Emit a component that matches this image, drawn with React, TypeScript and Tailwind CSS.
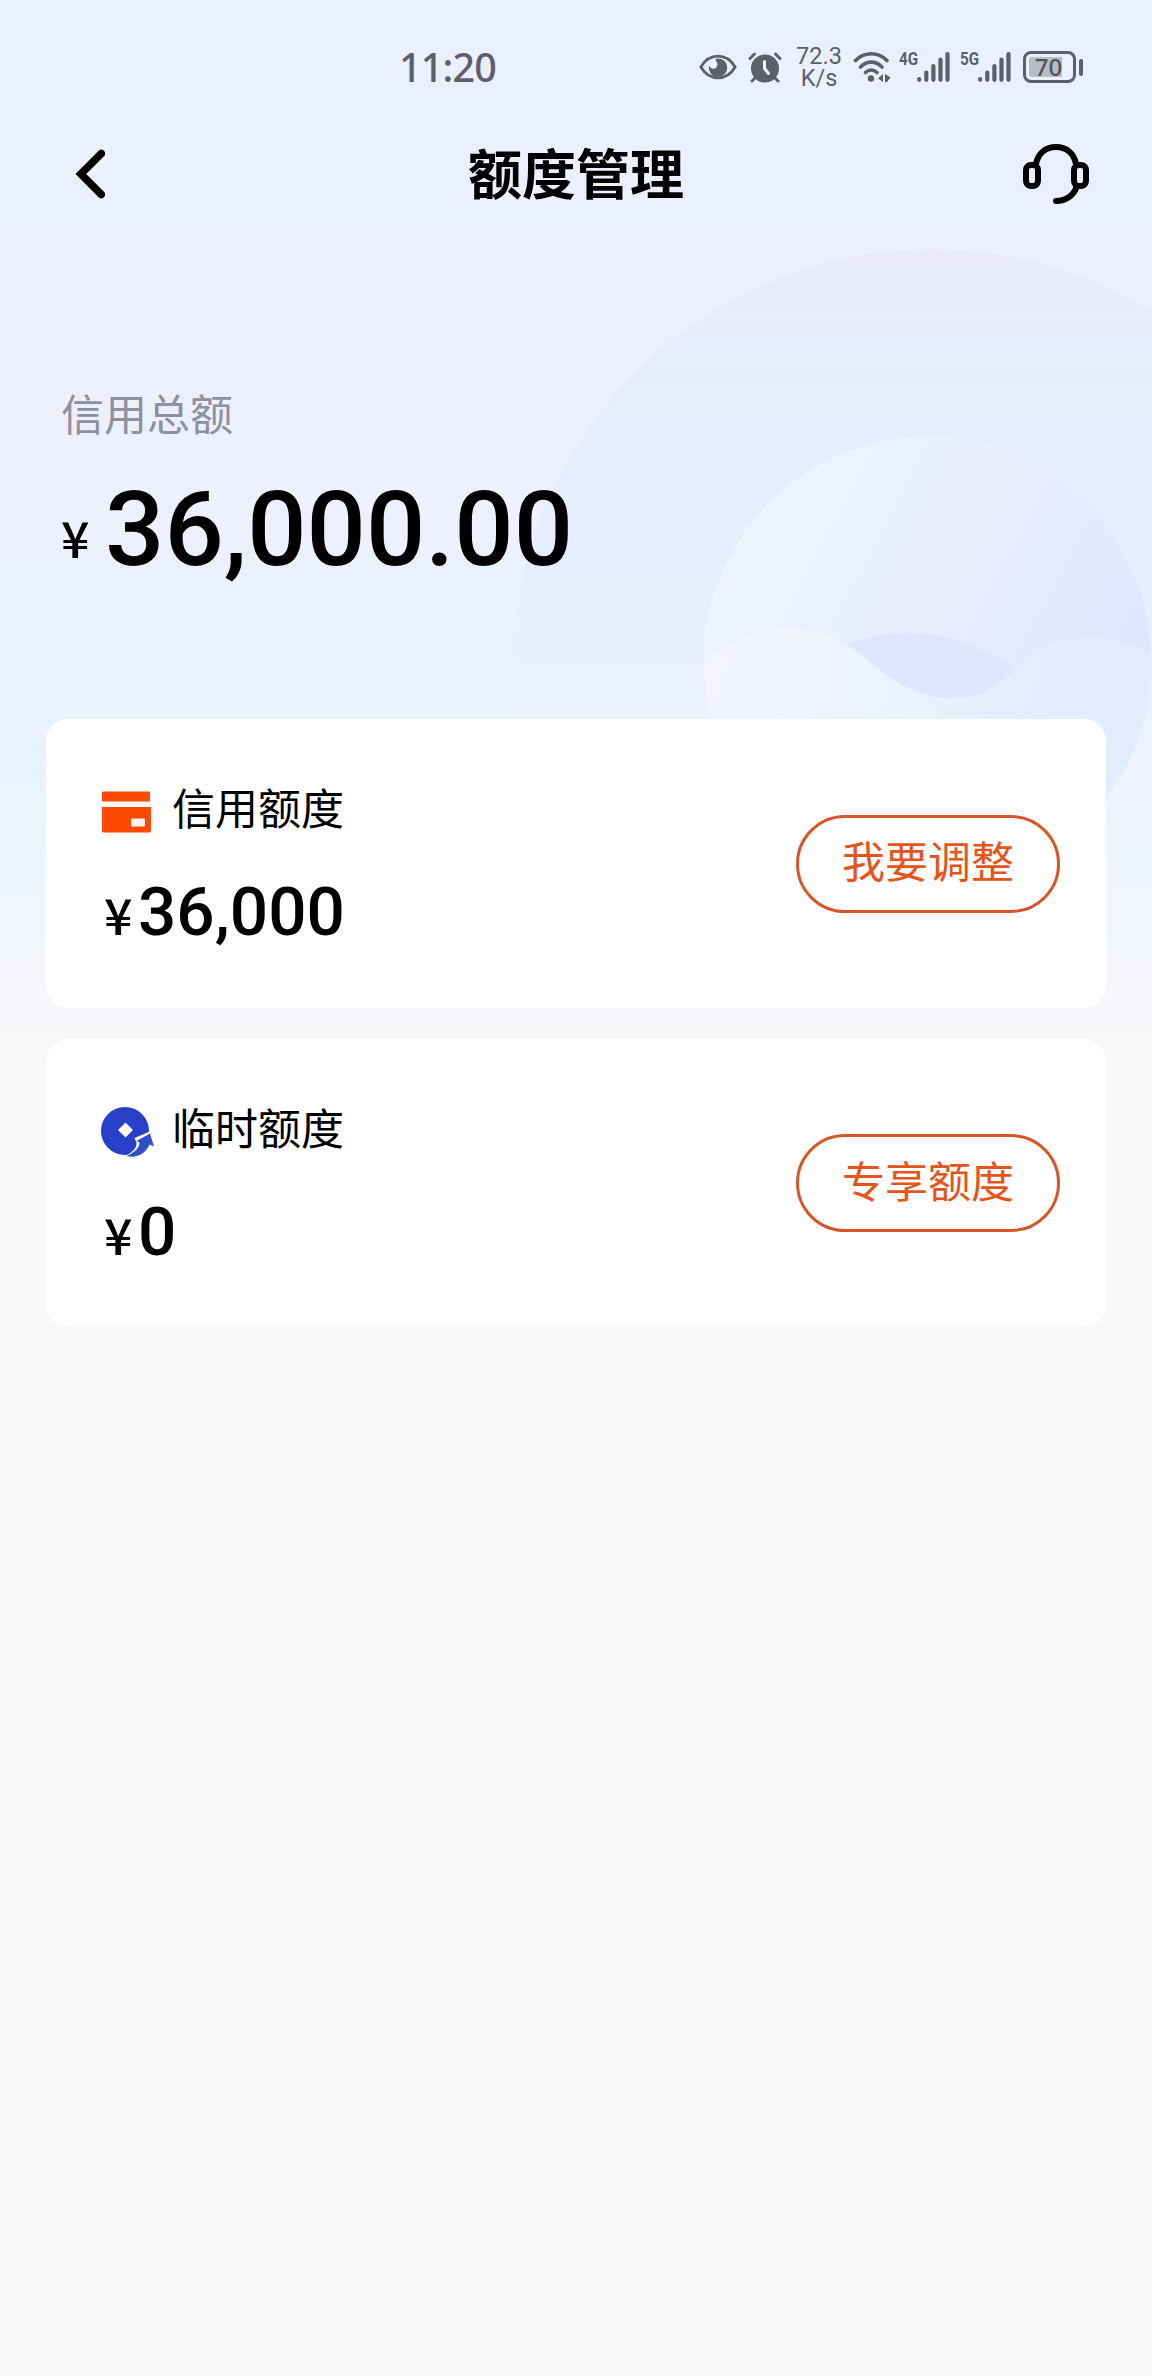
import type { ReactNode } from 'react';

interface LimitCardProps {
    icon: ReactNode;
    title: string;
    amount: string;
    action: string;
}

function Backdrop() {
    return (
        <svg className="absolute left-0 top-0" width="1152" height="1080" viewBox="0 0 1152 1080" fill="none">
            <defs>
                <linearGradient id="sky" x1="0" y1="0" x2="0" y2="1">
                    <stop offset="0" stopColor="#eaf0ff" />
                    <stop offset="0.2" stopColor="#ebf0ff" />
                    <stop offset="0.3" stopColor="#eeeffe" />
                    <stop offset="0.46" stopColor="#edf0ff" />
                    <stop offset="0.58" stopColor="#eaf1ff" />
                    <stop offset="0.72" stopColor="#e9f2ff" />
                    <stop offset="0.8" stopColor="#ecf6ff" />
                    <stop offset="0.86" stopColor="#f3f5fe" />
                    <stop offset="0.94" stopColor="#f6f6fa" />
                    <stop offset="1" stopColor="#f8f8f8" />
                </linearGradient>
                <linearGradient id="halo" x1="0" y1="0" x2="0" y2="1">
                    <stop offset="0" stopColor="#eae9fb" />
                    <stop offset="0.14" stopColor="#e5edfd" />
                    <stop offset="0.35" stopColor="#e6edfe" />
                    <stop offset="0.52" stopColor="#e9f1ff" />
                    <stop offset="0.62" stopColor="#f0f2ff" />
                    <stop offset="0.8" stopColor="#f4f6fe" stopOpacity="0" />
                </linearGradient>
                <linearGradient id="ball" x1="0.1" y1="0.2" x2="0.95" y2="0.65">
                    <stop offset="0" stopColor="#edf4ff" />
                    <stop offset="0.5" stopColor="#e8ecfd" />
                    <stop offset="1" stopColor="#dfe5fe" />
                </linearGradient>
                <linearGradient id="wave" x1="0" y1="0" x2="1" y2="0.2">
                    <stop offset="0" stopColor="#f4f4fe" />
                    <stop offset="0.4" stopColor="#ecf3ff" />
                    <stop offset="0.75" stopColor="#e4edfe" />
                    <stop offset="1" stopColor="#e3ebfe" />
                </linearGradient>
                <linearGradient id="rim" x1="0" y1="0.3" x2="0.8" y2="0.4">
                    <stop offset="0" stopColor="#f1f6ff" />
                    <stop offset="1" stopColor="#f1f6ff" stopOpacity="0" />
                </linearGradient>
                <clipPath id="ballClip">
                    <circle cx="928" cy="661" r="224" />
                </clipPath>
            </defs>
            <rect width="1152" height="1080" fill="url(#sky)" />
            <circle cx="933" cy="669" r="420" fill="url(#halo)" />
            <circle cx="928" cy="661" r="223" fill="url(#ball)" stroke="url(#rim)" strokeWidth="2" />
            <g clipPath="url(#ballClip)">
                <path d="M840 648C890 624 960 624 1030 680V720H850Z" fill="#e0e5fe" />
                <path
                    d="M704 661C740 632 800 612 853 649C885 673 908 698 953 698C990 698 1000 680 1024 663C1058 630 1115 629 1152 656V890H704Z"
                    fill="url(#wave)"
                />
            </g>
        </svg>
    );
}

function EyeIcon() {
    return (
        <svg width="38" height="26" viewBox="0 0 38 26" fill="none">
            <path d="M1.8 13C6 6 12 2.2 19 2.2S32 6 36.2 13C32 20 26 23.8 19 23.8S6 20 1.8 13Z" stroke="currentColor" strokeWidth="2.8" strokeLinejoin="round" />
            <path d="M18 4.500A9.200 9.200 0 1 1 10 11.500C11 15 16.500 16 18 12.500C19 9.800 18.200 7.500 16 6Z" fill="currentColor" />
        </svg>
    );
}

function AlarmIcon() {
    return (
        <svg width="34" height="31" viewBox="0 0 34 31" fill="none">
            <circle cx="17" cy="16.500" r="14" fill="currentColor" />
            <path d="M2 6.500L6.500 2M32 6.500L27.500 2M7 26L4 29M27 26L30 29" stroke="currentColor" strokeWidth="3" strokeLinecap="round" />
            <path d="M16.500 9.500V16.500L20.500 21.500" stroke="#eaf0ff" strokeWidth="3" strokeLinecap="round" strokeLinejoin="round" />
        </svg>
    );
}

function WifiIcon() {
    return (
        <svg width="38" height="32" viewBox="0 0 38 32" fill="none">
            <path d="M2.500 9.500C11.500 0.500 25 0.500 34 9.500M7.500 16C14 9.500 22.500 9.500 29 16M12.500 21.500C16 18.300 20.500 18.300 24 21.500" stroke="currentColor" strokeWidth="3.600" strokeLinecap="round" />
            <circle cx="18" cy="27.500" r="3.200" fill="currentColor" />
            <path d="M30 23V31L25 27.500ZM32 23L37.500 26.500L34 31H32Z" fill="currentColor" />
        </svg>
    );
}

function Signal({ label }: { label: string }) {
    return (
        <div className="flex items-start">
            <span className="w-[18px] origin-left scale-x-80 font-[Roboto] text-[19px] leading-[16px] font-bold">{label}</span>
            <svg width="33" height="32" viewBox="0 0 33 32" fill="none">
                <path d="M2.200 28V28.800M9.300 21.500V28.800M16.400 15V28.800M23.500 8.500V28.800M30.500 3V28.800" stroke="currentColor" strokeWidth="4.200" strokeLinecap="round" />
            </svg>
        </div>
    );
}

function Battery() {
    return (
        <div className="flex items-center gap-[3px]">
            <div className="flex h-[32px] w-[53px] items-center rounded-[8px] border-[3px] border-[#5d606b] p-[3px]">
                <div className="flex h-[20px] w-[33px] items-center justify-center rounded-l-[3px] bg-[#b8bcc7] pl-[6px]">
                    <span className="font-['Noto_Sans'] text-[24px] font-medium leading-none text-[#50535d]">70</span>
                </div>
            </div>
            <div className="h-[17px] w-[4px] rounded-[2px] bg-[#5d606b]" />
        </div>
    );
}

function StatusBar() {
    return (
        <div className="flex h-[134px] items-center text-[#5d606b]">
            <span className="ml-[399px] w-[300px] pt-[2px] font-['Noto_Sans'] text-[39.500px] font-medium leading-none tracking-[-0.8px]">11:20</span>
            <EyeIcon />
            <div className="ml-[11px]">
                <AlarmIcon />
            </div>
            <div className="ml-[13px] w-[48px] text-center font-[Roboto] text-[23.500px] leading-[22px]">
                <div>72.3</div>
                <div>K/s</div>
            </div>
            <div className="ml-[10px]">
                <WifiIcon />
            </div>
            <div className="ml-[8px]">
                <Signal label="4G" />
            </div>
            <div className="ml-[10px]">
                <Signal label="5G" />
            </div>
            <div className="ml-[12px]">
                <Battery />
            </div>
        </div>
    );
}

function HeadsetIcon() {
    return (
        <svg width="66" height="62" viewBox="0 0 66 62" fill="none" stroke="black" strokeWidth="6">
            <path d="M13 21C15 10 23 4 33 4S51 10 53 21" />
            <rect x="3" y="22" width="12" height="21" rx="5" />
            <rect x="51" y="22" width="12" height="21" rx="5" />
            <path d="M53.500 44C51 52 43 58 33 58" strokeLinecap="round" />
        </svg>
    );
}

function NavBar() {
    return (
        <div className="flex h-[80px] items-center justify-between pl-[75px] pr-[63px]">
            <svg className="mr-[24px]" width="30" height="50" viewBox="0 0 30 50" fill="none">
                <path d="M26.300 4.500L5.800 25L26.300 45.500" stroke="black" strokeWidth="7.500" strokeLinecap="round" />
            </svg>
            <h1 className="pb-[4px] text-[54px] font-bold leading-none text-black">额度管理</h1>
            <HeadsetIcon />
        </div>
    );
}

function CardIcon() {
    return (
        <svg width="52" height="50" viewBox="0 0 52 50">
            <path d="M3 4.500H50V14.500H2V5.500Z" fill="#fd4a03" />
            <path d="M2 20H51V44Q51 45.500 49.500 45.500H3.500Q2 45.500 2 44Z" fill="#fd4a03" />
            <rect x="31" y="31.500" width="14" height="8" rx="1.500" fill="#fff6ee" />
        </svg>
    );
}

function CoinIcon() {
    return (
        <svg width="56" height="52" viewBox="0 0 56 52">
            <circle cx="25" cy="25" r="24" fill="#2840c8" />
            <path d="M25.500 16.500L33 24L25.500 31.500L18 24Z" fill="white" />
            <path d="M25.500 50C33 46 37 41.500 36.500 36.500L34.500 32L51 25V50H38Z" fill="white" />
            <path d="M26.500 50C34 47 39.500 42 39.500 36.500L36.500 35L50 27.500L54 40.500L49.500 38.500C46 47 37 53 26.500 50Z" fill="#2f4fc4" />
        </svg>
    );
}

function LimitCard({ icon, title, amount, action }: LimitCardProps) {
    return (
        <section className="flex h-[288.500px] items-center justify-between rounded-[22px] bg-white pl-[54px] pr-[46px]">
            <div className="flex flex-col pt-[5px]">
                <div className="flex h-[52px] items-center">
                    <div className="w-[72px] pt-[2px]">{icon}</div>
                    <h2 className="pb-[9px] text-[43px] leading-none text-black">{title}</h2>
                </div>
                <div className="mt-[41px] flex items-baseline text-black">
                    <span className="w-[38px] pl-[4px] text-[50px] font-medium leading-none">¥</span>
                    <span className="font-[Roboto] text-[67.500px] font-medium leading-[68px]">{amount}</span>
                </div>
            </div>
            <button className="mt-px h-[98px] w-[264px] rounded-full border-[3px] border-[#d6562a] pb-[8px] text-[43px] leading-none text-[#e5541a]">
                {action}
            </button>
        </section>
    );
}

export default function App() {
    return (
        <div className="relative h-[2376px] w-[1152px] overflow-hidden bg-[#f8f8f8] font-['Noto_Sans_CJK_SC',sans-serif]">
            <Backdrop />
            <div className="relative flex flex-col">
                <StatusBar />
                <NavBar />
                <div className="h-[505px] px-[61px] pt-[177px]">
                    <p className="text-[43px] leading-none text-[#8e90a0]">信用总额</p>
                    <div className="mt-[43px] flex items-end text-black">
                        <span className="mb-[22px] w-[44px] text-[50px] font-medium leading-none">¥</span>
                        <span className="font-[Roboto] text-[104.500px] font-medium leading-[106px]">36,000.00</span>
                    </div>
                </div>
                <main className="flex flex-col gap-[31px] px-[46px]">
                    <LimitCard icon={<CardIcon />} title="信用额度" amount="36,000" action="我要调整" />
                    <LimitCard icon={<CoinIcon />} title="临时额度" amount="0" action="专享额度" />
                </main>
            </div>
        </div>
    );
}
